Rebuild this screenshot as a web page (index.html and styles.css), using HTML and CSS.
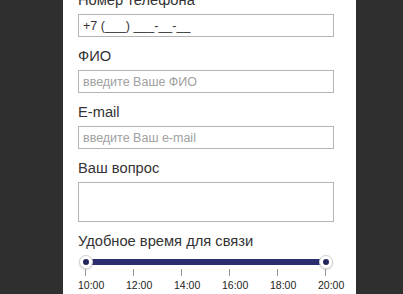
FILE: index.html
```html
<!DOCTYPE html>
<html lang="ru">
<head>
    <meta charset="UTF-8">
    <meta name="viewport" content="width=device-width, initial-scale=1.0">
    <title>Обратный звонок</title>
    <link rel="stylesheet" href="styles.css">
</head>
<body>
    <div class="panel">
        <form class="callback-form">
            <div class="field">
                <label class="field-label" for="phone">Номер телефона</label>
                <input class="field-input field-input--filled" id="phone" type="text" value="+7 (___) ___-__-__">
            </div>
            <div class="field">
                <label class="field-label" for="name">ФИО</label>
                <input class="field-input" id="name" type="text" placeholder="введите Ваше ФИО">
            </div>
            <div class="field">
                <label class="field-label" for="email">E-mail</label>
                <input class="field-input" id="email" type="text" placeholder="введите Ваш e-mail">
            </div>
            <div class="field">
                <label class="field-label" for="question">Ваш вопрос</label>
                <textarea class="field-input field-textarea" id="question"></textarea>
            </div>
            <div class="field">
                <span class="field-label">Удобное время для связи</span>
                <div class="range">
                    <div class="range-track">
                        <span class="range-handle range-handle--min"></span>
                        <span class="range-handle range-handle--max"></span>
                    </div>
                    <div class="range-scale">
                        <span class="range-mark">10:00</span>
                        <span class="range-mark">12:00</span>
                        <span class="range-mark">14:00</span>
                        <span class="range-mark">16:00</span>
                        <span class="range-mark">18:00</span>
                        <span class="range-mark">20:00</span>
                    </div>
                </div>
            </div>
        </form>
    </div>
</body>
</html>
```

FILE: styles.css
```css
* {
    margin: 0;
    padding: 0;
    box-sizing: border-box;
}

body {
    font-family: "Liberation Sans", Arial, sans-serif;
    background-color: #2f2f2f;
    color: #333333;
    height: 294px;
    overflow: hidden;
}

.panel {
    width: 293px;
    margin-left: 63px;
    margin-top: -19px;
    background-color: #ffffff;
    padding: 0 21px 20px 15px;
    min-height: 330px;
}

.field {
    padding-top: 10px;
}

.field-label {
    display: block;
    font-size: 14.7px;
    line-height: 18px;
    margin-bottom: 5px;
    color: #333333;
}

.field-input {
    display: block;
    width: 256px;
    height: 23px;
    border: 1px solid #b4b4b4;
    background-color: #ffffff;
    padding: 0 4px;
    font-family: "Liberation Sans", Arial, sans-serif;
    font-size: 12.5px;
    color: #333333;
    outline: none;
}

.field-input::placeholder {
    color: #a0a0a0;
}

.field-textarea {
    height: 40px;
    resize: none;
}

.range {
    padding-top: 4px;
}

.range-track {
    position: relative;
    margin: 0 9px 0 8px;
    height: 6px;
    background-color: #2b2d6e;
    border-radius: 3px;
}

.range-handle {
    position: absolute;
    top: -4px;
    width: 14px;
    height: 14px;
    border-radius: 50%;
    background-color: #ffffff;
    border: 1px solid #d2d2d2;
    box-shadow: 0 1px 2px rgba(0, 0, 0, 0.15);
}

.range-handle::after {
    content: "";
    position: absolute;
    left: 3px;
    top: 3px;
    width: 6px;
    height: 6px;
    border-radius: 50%;
    background-color: #23255e;
}

.range-handle--min {
    left: -7px;
}

.range-handle--max {
    right: -7px;
}

.range-scale {
    display: flex;
    justify-content: space-between;
    margin: 0 -6px 0 -7px;
    padding-top: 4px;
}

.range-mark {
    width: 30px;
    padding-left: 7px;
    text-align: center;
    font-size: 10.5px;
    line-height: 12px;
    color: #222222;
    position: relative;
    padding-top: 10px;
}

.range-mark::before {
    content: "";
    position: absolute;
    top: 0;
    left: 14px;
    width: 1px;
    height: 7px;
    background-color: #9a9a9a;
}
```
